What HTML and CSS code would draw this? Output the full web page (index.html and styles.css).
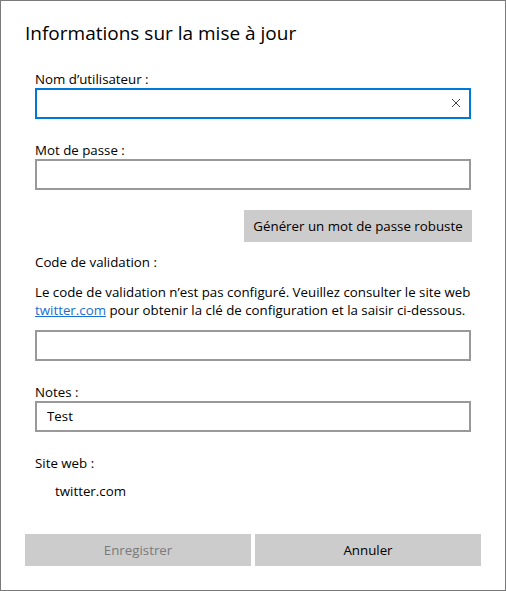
FILE: index.html
```html
<!DOCTYPE html>
<html lang="fr">
    <head>
        <meta charset="UTF-8">
        <meta name="viewport" content="width=device-width, initial-scale=1.0">
        <title>Informations sur la mise à jour</title>
        <link rel="stylesheet" href="styles.css">
    </head>
    <body>
        <div class="dialog">
            <h1 class="dialog-title">Informations sur la mise à jour</h1>

            <div class="form">
                <label class="field-label" for="username">Nom d’utilisateur :</label>
                <div class="field field-focused">
                    <input type="text" id="username">
                    <span class="clear-btn">
                        <svg width="10" height="10" viewBox="0 0 10 10">
                            <path d="M1 1 L9 9 M9 1 L1 9" stroke="#444" stroke-width="1" fill="none"/>
                        </svg>
                    </span>
                </div>

                <label class="field-label gap-lg" for="password">Mot de passe :</label>
                <div class="field">
                    <input type="password" id="password">
                </div>

                <div class="row-right">
                    <button class="btn btn-generate">Générer un mot de passe robuste</button>
                </div>

                <div class="field-label gap-sm">Code de validation :</div>
                <p class="info">
                    Le code de validation n’est pas configuré. Veuillez consulter le site web
                    <a href="#">twitter.com</a> pour obtenir la clé de configuration et la saisir ci-dessous.
                </p>
                <div class="field">
                    <input type="text" id="code">
                </div>

                <label class="field-label gap-lg" for="notes">Notes :</label>
                <div class="field">
                    <input type="text" id="notes" value="Test">
                </div>

                <div class="field-label gap-lg">Site web :</div>
                <div class="site-value">twitter.com</div>
            </div>

            <div class="actions">
                <button class="btn" disabled>Enregistrer</button>
                <button class="btn">Annuler</button>
            </div>
        </div>
    </body>
</html>
```

FILE: styles.css
```css
html, body {
    margin: 0;
    padding: 0;
}

body {
    font-family: 'Open Sans', 'Noto Sans', sans-serif;
    font-size: 13.3px;
    color: #000;
    background: #fff;
}

.dialog {
    width: 506px;
    height: 591px;
    box-sizing: border-box;
    border: 1px solid #7a7a7a;
    padding: 19px 24px 0 24px;
    display: flex;
    flex-direction: column;
}

.dialog-title {
    margin: 0;
    font-size: 19px;
    font-weight: normal;
    line-height: 26px;
    color: #000;
}

.form {
    display: flex;
    flex-direction: column;
    padding: 24px 10px 0 10px;
}

.field-label {
    display: block;
    line-height: 18px;
    height: 18px;
}

.gap-lg {
    margin-top: 22px;
}

.gap-sm {
    margin-top: 11px;
}

.field {
    position: relative;
    height: 31px;
    box-sizing: border-box;
    border: 2px solid #999;
    background: #fff;
}

.field-focused {
    border-color: #0078d7;
}

.field input {
    width: 100%;
    height: 100%;
    box-sizing: border-box;
    border: none;
    outline: none;
    padding: 0 30px 2px 10px;
    font: inherit;
    color: #000;
    background: transparent;
}

.clear-btn {
    position: absolute;
    right: 8px;
    top: 8px;
    width: 10px;
    height: 10px;
    display: flex;
}

.row-right {
    display: flex;
    justify-content: flex-end;
    margin-top: 20px;
    margin-right: -1px;
}

.btn {
    height: 32px;
    border: none;
    background-color: #cccccc;
    color: #000;
    font: inherit;
    padding: 0 6px;
    white-space: nowrap;
    cursor: pointer;
}

.btn:disabled {
    color: #7a7a7a;
    cursor: default;
}

.btn-generate {
    width: 228px;
}

.info {
    margin: 12px 0 11px 0;
    line-height: 18px;
}

.info a {
    color: #1a6fcf;
    text-decoration: underline;
}

.site-value {
    margin-top: 10px;
    padding-left: 20px;
    line-height: 18px;
}

.actions {
    display: grid;
    grid-template-columns: 1fr 1fr;
    gap: 4px;
    margin-top: 34px;
}
```
